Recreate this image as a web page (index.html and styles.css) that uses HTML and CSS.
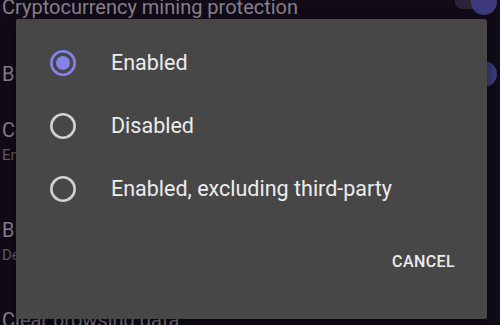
FILE: index.html
```html
<!DOCTYPE html>
<html>
<head>
    <meta charset="UTF-8">
    <title>Cryptocurrency mining protection</title>
    <link rel="stylesheet" href="styles.css">
</head>
<body>
    <div class="settings">
        <div class="pref pref--first">
            <div class="pref-title">Cryptocurrency mining protection</div>
            <span class="switch"><span class="switch-track"></span><span class="switch-thumb"></span></span>
        </div>
        <div class="pref pref--second">
            <div class="pref-title">Block fingerprinting</div>
            <span class="switch"><span class="switch-track"></span><span class="switch-thumb"></span></span>
        </div>
        <div class="pref pref--third">
            <div class="pref-text">
                <div class="pref-title">Cookies</div>
                <div class="pref-summary">Enabled</div>
            </div>
        </div>
        <div class="pref pref--fourth">
            <div class="pref-text">
                <div class="pref-title">Block ads</div>
                <div class="pref-summary">Default</div>
            </div>
        </div>
        <div class="pref pref--last">
            <div class="pref-title">Clear browsing data</div>
        </div>
    </div>

    <div class="dialog">
        <ul class="options">
            <li class="option option--checked">
                <svg class="radio" viewBox="0 0 24 24" width="28" height="28">
                    <circle cx="12" cy="12" r="10" fill="none" stroke="currentColor" stroke-width="2.2"/>
                    <circle cx="12" cy="12" r="6" fill="currentColor"/>
                </svg>
                <span class="option-label">Enabled</span>
            </li>
            <li class="option">
                <svg class="radio" viewBox="0 0 24 24" width="28" height="28">
                    <circle cx="12" cy="12" r="10" fill="none" stroke="currentColor" stroke-width="2.2"/>
                </svg>
                <span class="option-label">Disabled</span>
            </li>
            <li class="option">
                <svg class="radio" viewBox="0 0 24 24" width="28" height="28">
                    <circle cx="12" cy="12" r="10" fill="none" stroke="currentColor" stroke-width="2.2"/>
                </svg>
                <span class="option-label">Enabled, excluding third-party</span>
            </li>
        </ul>
        <div class="dialog-actions">
            <button class="btn-text">CANCEL</button>
        </div>
    </div>
</body>
</html>
```

FILE: styles.css
```css
:root {
    --page-bg: #110b17;
    --dialog-bg: #474747;
    --accent: #8582ee;
    --text-dim: #85808b;
    --summary-dim: #5f5a66;
    --text-light: #ececec;
}
body {
    font-family: Roboto, "Noto Sans", sans-serif;
    background-color: var(--page-bg);
    margin: 0;
    padding: 0;
    width: 500px;
    height: 325px;
    overflow: hidden;
    position: relative;
}

/* settings list behind the dialog (already dimmed) */
.settings { margin-top: -26px; }
.pref {
    display: flex; align-items: center; justify-content: space-between;
    padding: 21px 3px 21px 2px;
}
.pref--second { padding-top: 21px; padding-bottom: 15px; }
.pref--third { padding-top: 16px; padding-bottom: 26px; }
.pref--fourth { padding-top: 27px; padding-bottom: 20px; }
.pref--last { padding-top: 23px; }
.pref-title { font-size: 20px; line-height: 24px; color: var(--text-dim); }
.pref-summary { font-size: 15px; line-height: 20px; margin-top: 3px; color: var(--summary-dim); }

.switch { position: relative; width: 42px; height: 26px; flex-shrink: 0; }
.switch-track {
    position: absolute; left: 0; top: 6px; width: 34px; height: 14px;
    border-radius: 7px; background-color: #2a2436;
}
.switch-thumb {
    position: absolute; right: 0; top: 0; width: 26px; height: 26px;
    border-radius: 50%; background-color: #3d3a7d;
}
.pref--first .switch { margin-top: -10px; }

/* dialog */
.dialog {
    position: absolute; left: 16px; top: 19px; width: 471px;
    background-color: var(--dialog-bg);
    border-radius: 2px;
    box-shadow: 0 4px 12px rgba(0, 0, 0, 0.5);
}
.options { list-style: none; margin: 0; padding: 12px 0 0; }
.option {
    display: flex; align-items: center; height: 63px;
    padding-left: 33px; color: #d2d2d2;
}
.option--checked { color: var(--accent); }
.radio { flex-shrink: 0; margin-right: 34px; }
.option-label { font-size: 21.5px; color: var(--text-light); }

.dialog-actions { display: flex; justify-content: flex-end; padding: 24px 24px 39px; }
.btn-text {
    font-family: Roboto, sans-serif; font-size: 16px; font-weight: 500; line-height: 20px;
    letter-spacing: 0.4px; color: var(--text-light);
    background: none; border: none; padding: 8px; cursor: pointer;
}
```
